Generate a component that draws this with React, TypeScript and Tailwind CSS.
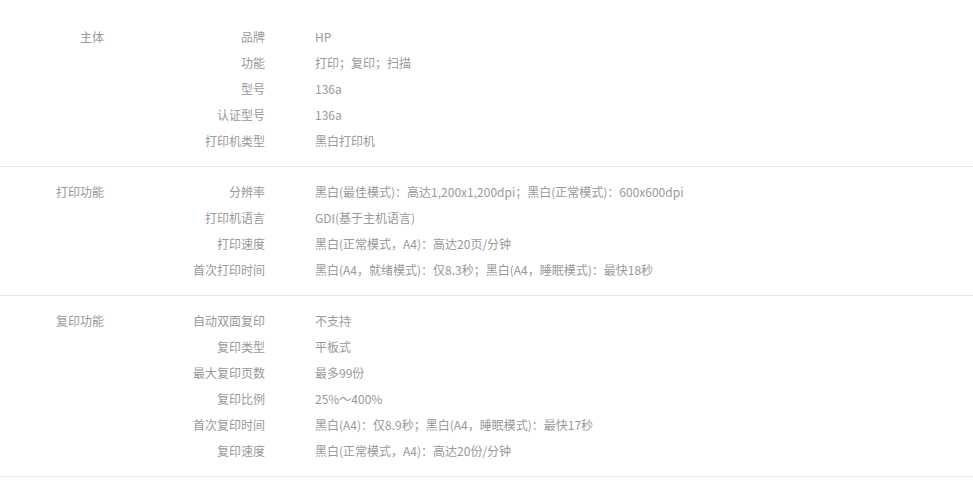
const sections = [
  {
    title: "主体",
    rows: [
      ["品牌", "HP"],
      ["功能", "打印；复印；扫描"],
      ["型号", "136a"],
      ["认证型号", "136a"],
      ["打印机类型", "黑白打印机"],
    ],
  },
  {
    title: "打印功能",
    rows: [
      ["分辨率", "黑白(最佳模式)：高达1,200x1,200dpi；黑白(正常模式)：600x600dpi"],
      ["打印机语言", "GDI(基于主机语言)"],
      ["打印速度", "黑白(正常模式，A4)：高达20页/分钟"],
      ["首次打印时间", "黑白(A4，就绪模式)：仅8.3秒；黑白(A4，睡眠模式)：最快18秒"],
    ],
  },
  {
    title: "复印功能",
    rows: [
      ["自动双面复印", "不支持"],
      ["复印类型", "平板式"],
      ["最大复印页数", "最多99份"],
      ["复印比例", "25%～400%"],
      ["首次复印时间", "黑白(A4)：仅8.9秒；黑白(A4，睡眠模式)：最快17秒"],
      ["复印速度", "黑白(正常模式，A4)：高达20份/分钟"],
    ],
  },
]

export default function App() {
  return (
    <main
      className="min-h-screen bg-white pt-3 text-[12px] text-[#999]"
      style={{ fontFamily: '"Microsoft YaHei", "Noto Sans CJK SC", sans-serif' }}
    >
      {sections.map((s) => (
        <div key={s.title} className="flex border-b border-[#e8e8e8] py-3">
          <div className="w-[104px] shrink-0 text-right leading-[26px]">{s.title}</div>
          <div className="flex flex-col">
            {s.rows.map(([label, value]) => (
              <div key={label} className="flex h-[26px] items-center">
                <div className="w-[161px] shrink-0 text-right">{label}</div>
                <div className="pl-[50px]">{value}</div>
              </div>
            ))}
          </div>
        </div>
      ))}
    </main>
  )
}
